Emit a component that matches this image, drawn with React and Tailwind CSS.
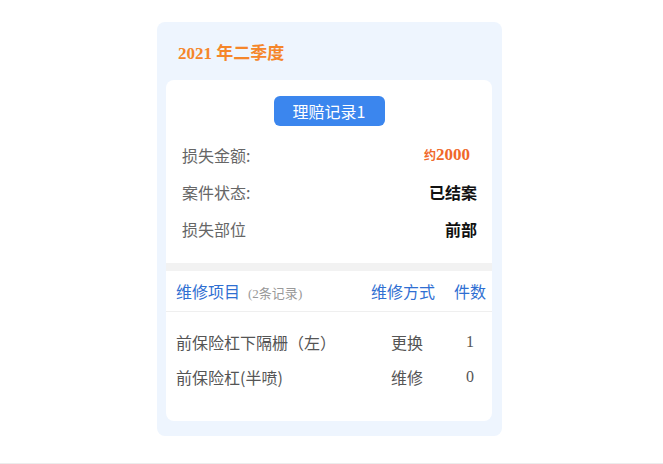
import React from "react";

const SANS = { fontFamily: '"Noto Sans CJK SC", "Noto Sans", sans-serif' };
const SERIF = { fontFamily: '"Liberation Serif", "Noto Sans CJK SC", serif' };

// summary rows of the claim record
const SUMMARY = [
  { label: "损失金额:", value: "2000", approx: true },
  { label: "案件状态:", value: "已结案" },
  { label: "损失部位", value: "前部" },
];

const REPAIRS = [
  { name: "前保险杠下隔栅（左）", way: "更换", count: 1 },
  { name: "前保险杠(半喷)", way: "维修", count: 0 },
];

const App = () => {
  return (
    <div className="w-[663px] h-[464px] bg-white border-b border-[#ececec] box-border overflow-hidden" style={SANS}>
      <div className="ml-[157px] mt-[22px] w-[345px] rounded-[8px] bg-[#eef5fe] pl-[9px] pr-[10px] pb-[15px]">
        <div className="h-[58px] flex items-center pl-[12px] pt-[3px]">
          <span className="text-[17px] font-bold text-[#f5862a]" style={SERIF}>
            2021 <span style={SANS}>年二季度</span>
          </span>
        </div>

        <div className="bg-white rounded-[8px] overflow-hidden">
          <div className="pt-[16px] flex justify-center">
            <div className="w-[111px] h-[30px] rounded-[6px] bg-[#3b86ee] text-white text-[16px] flex items-center justify-center">
              理赔记录1
            </div>
          </div>

          <div className="mt-[10px] mb-[16px]">
            {SUMMARY.map((row) => (
              <div key={row.label} className="h-[37px] flex items-center justify-between pl-[16px] pr-[15px]">
                <span className="text-[16px] text-[#666]">{row.label}</span>
                {row.approx ? (
                  <span className="mr-[7px] text-[#f0682a] font-bold flex items-baseline">
                    <span className="text-[12px]" style={SANS}>约</span>
                    <span className="text-[17px]" style={SERIF}>{row.value}</span>
                  </span>
                ) : (
                  <span className="text-[16px] font-bold text-[#111]">{row.value}</span>
                )}
              </div>
            ))}
          </div>

          <div className="h-[8px] bg-[#f2f2f2]" />

          <div className="h-[41px] flex items-center border-b border-[#efefef] pl-[10px] pr-[2px] text-[16px] text-[#2f6fd2]">
            <div className="flex-1 flex items-baseline">
              <span>维修项目</span>
              <span className="ml-[8px] text-[13px] text-[#999]" style={SERIF}>(2<span style={SANS}>条记录</span>)</span>
            </div>
            <div className="w-[80px] mr-[7px] text-center">维修方式</div>
            <div className="w-[40px] text-center">件数</div>
          </div>

          <div className="pt-[12px] pb-[27px]">
            {REPAIRS.map((item) => (
              <div key={item.name} className="h-[35px] flex items-center pl-[10px] pr-[2px] text-[16px] text-[#555]">
                <div className="flex-1">{item.name}</div>
                <div className="w-[80px] mr-[3px] text-center">{item.way}</div>
                <div className="w-[40px] text-center" style={SERIF}>{item.count}</div>
              </div>
            ))}
          </div>
        </div>
      </div>
    </div>
  );
};

export default App;
